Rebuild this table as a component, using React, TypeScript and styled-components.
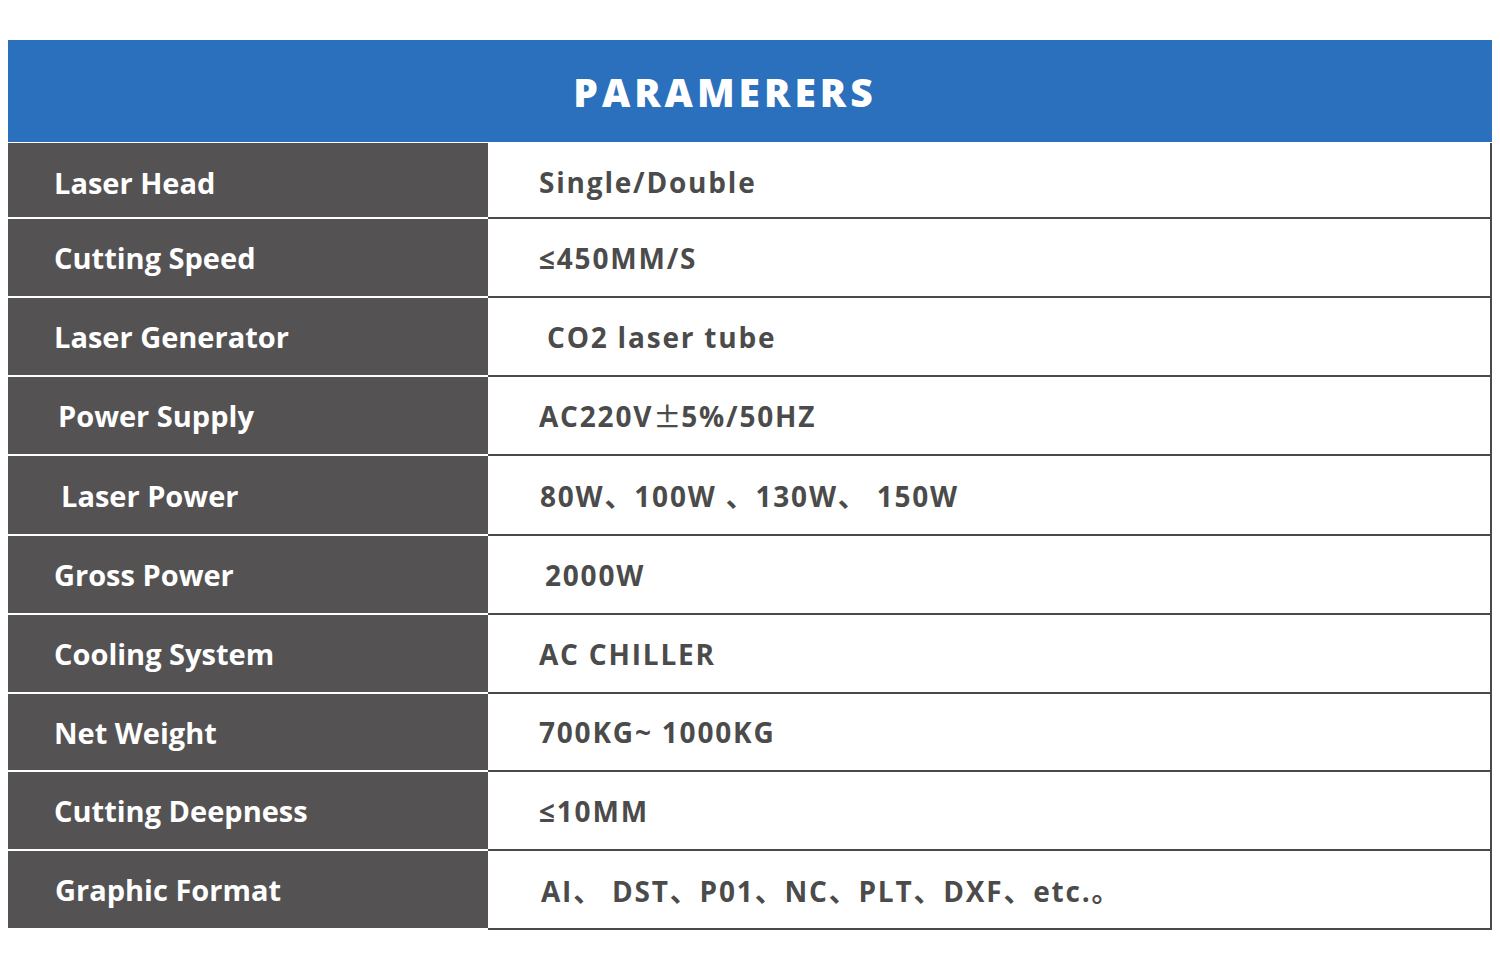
import styled, { createGlobalStyle } from 'styled-components';

const GlobalStyle = createGlobalStyle`
  body {
    margin: 8px;
    background: #ffffff;
    font-family: 'Open Sans', 'Noto Sans CJK SC', sans-serif;
  }
`;

const PARAMS = [
  { label: 'Laser Head', value: 'Single/Double', height: 76, labelIndent: 0, valueIndent: 0 },
  { label: 'Cutting Speed', value: '≤450MM/S', height: 79, labelIndent: 0, valueIndent: 0 },
  { label: 'Laser Generator', value: 'CO2 laser tube', height: 79, labelIndent: 0, valueIndent: 8 },
  { label: 'Power Supply', value: ['AC220V', '±', '5%/50HZ'], height: 79, labelIndent: 4, valueIndent: 0 },
  { label: 'Laser Power', value: '80W、100W 、130W、 150W', height: 80, labelIndent: 7, valueIndent: 1 },
  { label: 'Gross Power', value: '2000W', height: 79, labelIndent: 0, valueIndent: 6 },
  { label: 'Cooling System', value: 'AC CHILLER', height: 79, labelIndent: 0, valueIndent: 0 },
  { label: 'Net Weight', value: '700KG~ 1000KG', height: 78, labelIndent: 0, valueIndent: 0 },
  { label: 'Cutting Deepness', value: '≤10MM', height: 79, labelIndent: 0, valueIndent: 0 },
  { label: 'Graphic Format', value: 'AI、 DST、P01、NC、PLT、DXF、etc.。', height: 79, labelIndent: 1, valueIndent: 2 },
];

function App() {
  return (
    <>
      <GlobalStyle />
      <Page>
        <Header>PARAMERERS</Header>
        <Table>
          {PARAMS.map((row, i) => (
            <Row key={row.label} $height={row.height}>
              <Label $indent={row.labelIndent} $first={i === 0}>{row.label}</Label>
              <Value $indent={row.valueIndent} $first={i === 0}>
                {Array.isArray(row.value) ? (
                  <>
                    {row.value[0]}
                    <Wide>{row.value[1]}</Wide>
                    {row.value[2]}
                  </>
                ) : (
                  row.value
                )}
              </Value>
            </Row>
          ))}
        </Table>
      </Page>
    </>
  );
}

export default App;

const Page = styled.div`
  padding-top: 32px;
  width: 1484px;
`;

const Header = styled.h1`
  margin: 0 0 1px;
  height: 102px;
  display: flex;
  align-items: center;
  justify-content: center;
  background: #2a70bc;
  color: #ffffff;
  font-family: 'Open Sans', sans-serif;
  font-size: 39px;
  font-weight: 800;
  letter-spacing: 4px;
  padding-right: 50px;
`;

const Table = styled.div`
  display: flex;
  flex-direction: column;
`;

const Row = styled.div<{ $height: number }>`
  display: grid;
  grid-template-columns: 480px 1fr;
  height: ${(p) => p.$height}px;
`;

const Label = styled.div<{ $indent: number; $first: boolean }>`
  display: flex;
  align-items: center;
  padding-left: ${(p) => 46 + p.$indent}px;
  padding-top: ${(p) => (p.$first ? 4 : 0)}px;
  background: #545253;
  border-bottom: 2px solid #ffffff;
  color: #ffffff;
  font-size: 29px;
  font-weight: 700;
`;

const Value = styled.div<{ $indent: number; $first: boolean }>`
  display: flex;
  align-items: center;
  padding-left: ${(p) => 51 + p.$indent}px;
  padding-top: ${(p) => (p.$first ? 4 : 0)}px;
  border-bottom: 2px solid #4a4a4a;
  border-right: 2px solid #4a4a4a;
  color: #4b4b4b;
  font-size: 28px;
  font-weight: 700;
  letter-spacing: 1.8px;
  white-space: pre;
`;

const Wide = styled.span`
  font-family: 'Noto Sans CJK SC', sans-serif;
  font-weight: 500;
  letter-spacing: 0;
`;
